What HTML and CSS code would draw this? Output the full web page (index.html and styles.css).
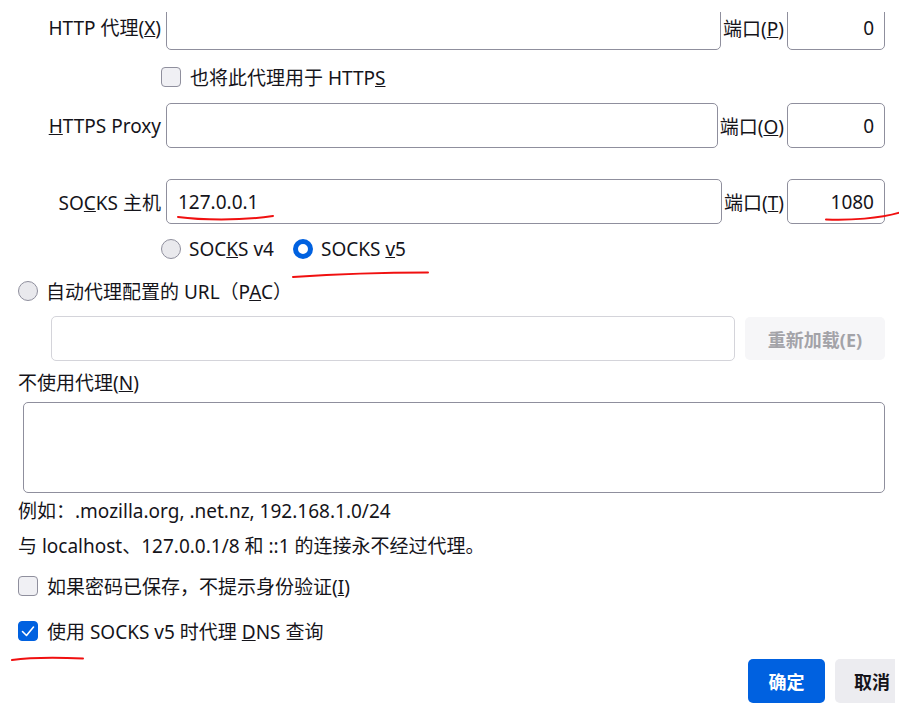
FILE: index.html
```html
<!DOCTYPE html>
<html lang="zh-CN">
<head>
<meta charset="utf-8">
<title>连接设置</title>
<link rel="stylesheet" href="styles.css">
</head>
<body>
<div class="page">
  <div class="row row-http">
    <label class="lbl">HTTP 代理(<u>X</u>)</label>
    <div class="field"></div>
    <label class="port-lbl">端口(<u>P</u>)</label>
    <div class="field port">0</div>
  </div>
  <div class="opt indent opt-https">
    <span class="box"></span>
    <span>也将此代理用于 HTTP<u>S</u></span>
  </div>
  <div class="row row-https">
    <label class="lbl"><u>H</u>TTPS Proxy</label>
    <div class="field"></div>
    <label class="port-lbl">端口(<u>O</u>)</label>
    <div class="field port">0</div>
  </div>
  <div class="row row-socks">
    <label class="lbl">SO<u>C</u>KS 主机</label>
    <div class="field value">127.0.0.1</div>
    <label class="port-lbl">端口(<u>T</u>)</label>
    <div class="field port">1080</div>
  </div>
  <div class="radios indent">
    <div class="opt"><span class="radio"></span><span>SOC<u>K</u>S v4</span></div>
    <div class="opt"><span class="radio on"></span><span>SOCKS <u>v</u>5</span></div>
  </div>
  <div class="opt pac">
    <span class="radio"></span>
    <span>自动代理配置的 URL（P<u>A</u>C）</span>
  </div>
  <div class="pac-row">
    <div class="field disabled"></div>
    <div class="btn reload">重新加载(E)</div>
  </div>
  <div class="text noproxy-lbl">不使用代理(<u>N</u>)</div>
  <div class="area"></div>
  <div class="text example">例如：.mozilla.org, .net.nz, 192.168.1.0/24</div>
  <div class="text localhost">与 localhost、127.0.0.1/8 和 ::1 的连接永不经过代理。</div>
  <div class="opt check1">
    <span class="box"></span>
    <span>如果密码已保存，不提示身份验证(<u>I</u>)</span>
  </div>
  <div class="opt check2">
    <span class="box on">
      <svg viewBox="0 0 20 20" width="20" height="20"><path d="M4.5 10.5 L8.5 14.5 L15.5 6" fill="none" stroke="#fff" stroke-width="1.6" stroke-linecap="round" stroke-linejoin="round"/></svg>
    </span>
    <span>使用 SOCKS v5 时代理 <u>D</u>NS 查询</span>
  </div>
  <div class="actions">
    <div class="btn primary">确定</div>
    <div class="btn cancel">取消</div>
  </div>
  <div class="top-cover"></div>
  <svg class="marks" width="899" height="706" viewBox="0 0 899 706">
    <path d="M178 217 C 200 220, 240 221, 273 216" />
    <path d="M826 219.5 C 850 220.5, 880 218.5, 900 212.5" />
    <path d="M293 277 C 330 274.5, 380 272.5, 428 272.5" />
    <path d="M12 660 C 30 657.5, 60 657.5, 83 658.5" />
  </svg>
</div>
</body>
</html>
```
FILE: styles.css
```css
html, body {
  margin: 0;
  padding: 0;
  background: #fff;
}
body {
  font-family: "Noto Sans", "Noto Sans CJK SC", sans-serif;
  font-size: 19px;
  color: #15141a;
  width: 899px;
  height: 706px;
  overflow: hidden;
}
u {
  text-decoration: underline;
  text-underline-offset: 1px;
  text-decoration-thickness: 1px;
}
.page {
  position: relative;
  width: 899px;
  height: 706px;
  display: flex;
  flex-direction: column;
  padding: 0 14px 0 18px;
  box-sizing: border-box;
}
.row {
  display: flex;
  align-items: center;
  height: 45px;
  margin-left: -18px;
}
.lbl {
  width: 161px;
  text-align: right;
  margin-right: 5px;
  white-space: nowrap;
}
.field {
  flex: 1;
  height: 45px;
  box-sizing: border-box;
  border: 1px solid #8f8f9d;
  border-radius: 5px;
  background: #fff;
  display: flex;
  align-items: center;
  padding: 0 11px;
}
.port-lbl {
  margin: 0 3px 0 2px;
  white-space: nowrap;
}
.field.port {
  flex: 0 0 98px;
  justify-content: flex-end;
  padding: 0 10px;
}
.row-http { margin-top: 5px; }
.row-http .lbl { padding-bottom: 2px; }
.opt-https { margin-top: 17px; }
.row-https { margin-top: 16px; }
.row-socks { margin-top: 31px; }
.indent { margin-left: 143px; }
.opt {
  display: flex;
  align-items: center;
  height: 20px;
  white-space: nowrap;
}
.opt .box, .opt .radio { margin-right: 9px; }
.box {
  width: 20px;
  height: 20px;
  box-sizing: border-box;
  border: 1px solid #8f8f9d;
  border-radius: 4px;
  background: #f0f0f4;
  flex: none;
  display: flex;
}
.box.on {
  background: #0061e0;
  border-color: #0061e0;
}
.box.on svg { margin: -1px; }
.radio {
  width: 20px;
  height: 20px;
  box-sizing: border-box;
  border: 1px solid #8f8f9d;
  border-radius: 50%;
  background: #e9e9ed;
  flex: none;
}
.radio.on {
  border: 5px solid #0061e0;
  background: #fff;
}
.radios {
  display: flex;
  margin-top: 15px;
  gap: 19px;
}
.radios .opt .radio { margin-right: 8px; }
.pac { margin-top: 22px; }
.pac .radio { margin-right: 8px; }
.pac-row {
  display: flex;
  align-items: center;
  margin-top: 15px;
  margin-left: 33px;
  height: 45px;
}
.field.disabled {
  border-color: #d4d4da;
}
.btn {
  display: flex;
  align-items: center;
  justify-content: center;
  border-radius: 5px;
  font-weight: bold;
  box-sizing: border-box;
}
.reload {
  width: 140px;
  height: 43px;
  margin-left: 10px;
  background: #f6f6f8;
  color: #a3a3a8;
  font-size: 18px;
}
.text {
  height: 24px;
  line-height: 24px;
  white-space: nowrap;
}
.noproxy-lbl { margin-top: 10px; }
.area {
  margin-top: 7px;
  margin-left: 5px;
  height: 91px;
  border: 1px solid #8f8f9d;
  border-radius: 5px;
  box-sizing: border-box;
}
.example { margin-top: 6px; }
.localhost { margin-top: 11px; }
.check1 { margin-top: 18px; }
.check2 { margin-top: 25px; }
.actions {
  display: flex;
  justify-content: flex-end;
  margin-top: 18px;
  margin-right: -14px;
  gap: 10px;
}
.btn.primary {
  width: 77px;
  height: 44px;
  background: #0061e0;
  color: #fff;
  font-size: 18px;
}
.btn.cancel {
  width: 60px;
  height: 44px;
  background: #ececf0;
  color: #15141a;
  font-size: 18px;
  border-radius: 5px 0 0 5px;
  justify-content: flex-start;
  padding-left: 19px;
  margin-right: 4px;
}
.top-cover {
  position: absolute;
  left: 0;
  top: 0;
  width: 899px;
  height: 12px;
  background: #fff;
}
.marks {
  position: absolute;
  left: 0;
  top: 0;
  pointer-events: none;
}
.marks path {
  fill: none;
  stroke: #f01010;
  stroke-width: 2;
  stroke-linecap: round;
}
```
